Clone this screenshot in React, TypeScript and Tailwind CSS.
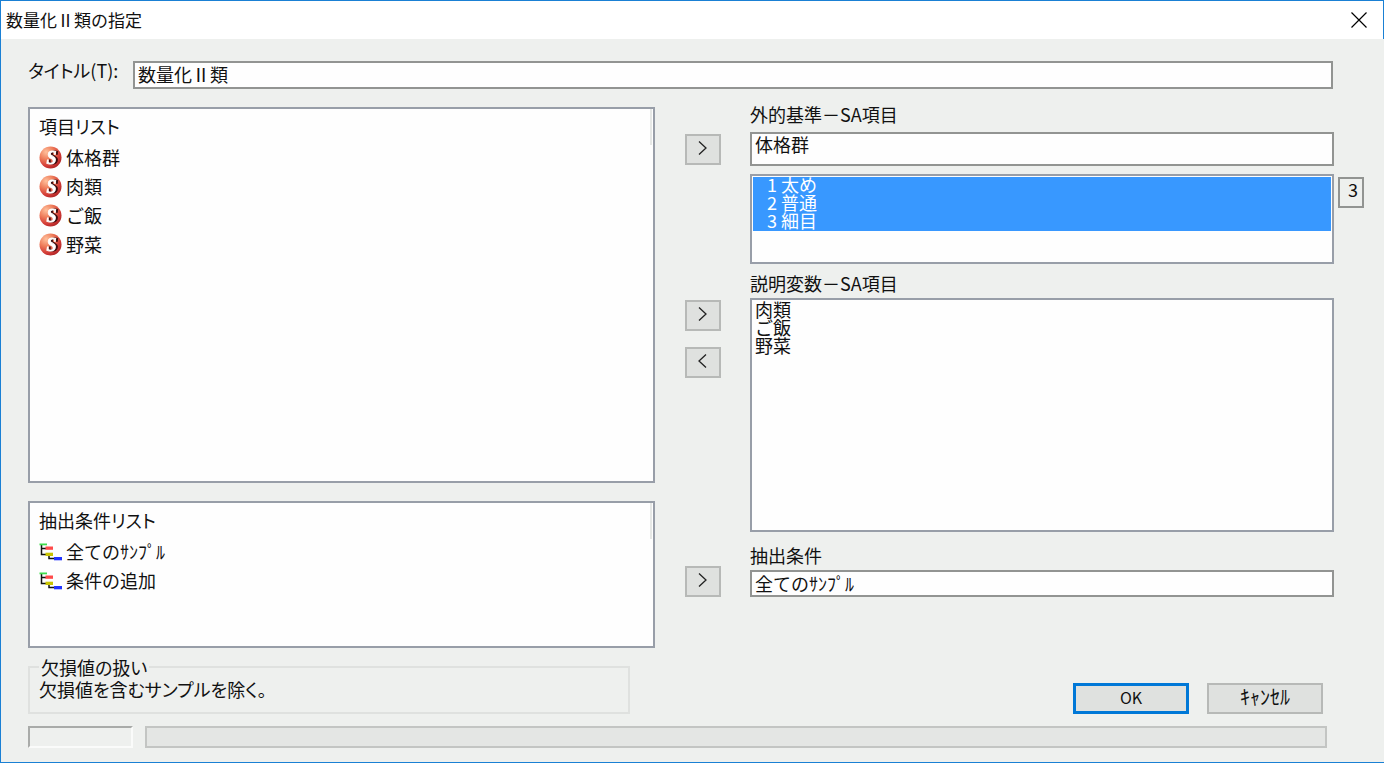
import type { ReactNode } from "react";

const ITEMS = ["体格群", "肉類", "ご飯", "野菜"];
const CONDITIONS = ["全てのｻﾝﾌﾟﾙ", "条件の追加"];
const CATEGORIES = ["太め", "普通", "細目"];
const EXPLANATORY = ["肉類", "ご飯", "野菜"];

const FIELD = "block w-full border-2 border-[#929492] bg-[#fefefe] px-[3px] leading-[18px] outline-none";
const LIST = "border-2 border-[#989ea8] bg-[#fefefe]";

function SphereIcon() {
  return (
    <svg viewBox="0 0 23 23" className="h-[23px] w-[23px] shrink-0" aria-hidden="true">
      <defs>
        <radialGradient id="sphere" cx="0.3" cy="0.25" r="0.85">
          <stop offset="0" stopColor="#ffc09c" />
          <stop offset="0.4" stopColor="#ee7c5a" />
          <stop offset="0.75" stopColor="#d23a36" />
          <stop offset="1" stopColor="#a82224" />
        </radialGradient>
      </defs>
      <circle cx="11.5" cy="11.5" r="11" fill="url(#sphere)" />
      <g fontFamily="Liberation Serif, serif" fontSize="18" fontWeight="700" fontStyle="italic" textAnchor="middle">
        <text
          x="12.5"
          y="17.500"
          fill="#fff"
          stroke="#fff"
          strokeWidth="0.8"
          className="[filter:drop-shadow(2px_0_0_#3a0c0e)]"
        >
          S
        </text>
      </g>
    </svg>
  );
}

function TreeIcon() {
  return (
    <svg viewBox="0 0 23 18" className="h-[18px] w-[23px] shrink-0" aria-hidden="true">
      <path d="M2.500 2V11.500H7M2.500 5.500H7M10 13V15.500H16" fill="none" stroke="#111" strokeWidth="1.500" />
      <rect x="0.500" y="0.500" width="7.500" height="1.800" fill="#3fdc4c" />
      <rect x="6.500" y="3.500" width="7.500" height="3.300" fill="#ff4a4a" />
      <rect x="6.500" y="9.700" width="7.500" height="3.300" fill="#c9c400" />
      <rect x="15" y="14" width="8" height="3.300" fill="#2233ff" />
    </svg>
  );
}

function MoveButton({ direction = "right", label }: { direction?: "left" | "right"; label: string }) {
  return (
    <button
      type="button"
      aria-label={label}
      className="flex h-[31px] w-9 items-center justify-center border-2 border-[#b7b9b7] bg-[#dfe1df] pb-1 pr-[2px]"
    >
      <svg viewBox="0 0 9 14" className="h-[14px] w-[9px]" fill="none" stroke="#222" strokeWidth="1.300">
        <path d={direction === "right" ? "M1 0.500L8 7L1 13.500" : "M8 0.500L1 7L8 13.500"} />
      </svg>
    </button>
  );
}

function SourceList({
  title,
  items,
  icon,
  className,
}: {
  title: string;
  items: string[];
  icon: ReactNode;
  className: string;
}) {
  return (
    <section className={`${LIST} flex ${className}`}>
      <div className="flex-1 px-[9px] pt-[7px]">
        <h2 className="mb-[7px] leading-5 [font-feature-settings:'palt']">{title}</h2>
        <ul role="listbox" aria-label={title}>
          {items.map((item) => (
            <li key={item} role="option" aria-selected={false} className="flex h-[29px] items-center gap-1">
              {icon}
              <span className="pb-[2px]">{item}</span>
            </li>
          ))}
        </ul>
      </div>
      {/* header column divider */}
      <div className="h-9 w-[3px] border-l-2 border-[#e6e8e6]" />
    </section>
  );
}

export default function App() {
  return (
    <div className="flex min-h-screen flex-col border-b border-l border-[#1a80d4] bg-[#eef0ee] font-['Noto_Sans_CJK_JP',sans-serif] text-[18px] leading-[18px] text-[#111]">
      <header className="flex h-[39px] items-center justify-between border-r border-t border-[#1a80d4] bg-white pl-[5px] pr-4">
        <h1 className="text-[17px]">数量化Ⅱ類の指定</h1>
        <button type="button" aria-label="閉じる">
          <svg viewBox="0 0 16 16" className="h-4 w-4" fill="none" stroke="#000" strokeWidth="1.200">
            <path d="M0.500 0.500L15.500 15.500M15.500 0.500L0.500 15.500" />
          </svg>
        </button>
      </header>

      <main className="flex-1 pb-[14px] pl-[27px] pr-5 pt-[22px]">
        <div className="mr-[31px] flex">
          <label htmlFor="title" className="w-[105px] shrink-0 [font-feature-settings:'palt']">
            タイトル(T):
          </label>
          <input id="title" type="text" defaultValue="数量化Ⅱ類" className={`${FIELD} h-7 pb-[2px]`} />
        </div>

        <div className="mt-[18px] flex gap-[30px]">
          <div className="min-w-0 flex-[627]">
            <SourceList title="項目リスト" items={ITEMS} icon={<SphereIcon />} className="min-h-[376px]" />
            <SourceList
              title="抽出条件リスト"
              items={CONDITIONS}
              icon={<TreeIcon />}
              className="mt-[18px] min-h-[147px]"
            />
            <fieldset className="mr-[25px] mt-[10px] h-14 border-2 border-[#dfe1df] px-[9px]">
              <legend className="px-[2px] [font-feature-settings:'palt']">欠損値の扱い</legend>
              <p className="pt-1 [font-feature-settings:'palt']">欠損値を含むサンプルを除く。</p>
            </fieldset>
          </div>

          <div className="min-w-0 flex-[679]">
            <section className="flex gap-[29px]">
              <div className="pt-[27px]">
                <MoveButton label="外的基準に設定" />
              </div>
              <div className="flex-1">
                <label htmlFor="criterion" className="block h-[25px] leading-[14px]">
                  外的基準－SA項目
                </label>
                <div className="mr-[30px]">
                  <input id="criterion" type="text" defaultValue="体格群" className={`${FIELD} h-[34px] pb-[10px]`} />
                </div>
                <div className="mt-2 flex items-start gap-1">
                  <ul
                    role="listbox"
                    aria-label="カテゴリー"
                    aria-multiselectable="true"
                    className={`${LIST} min-h-[90px] flex-1 p-px`}
                  >
                    {CATEGORIES.map((category, index) => (
                      <li
                        key={category}
                        role="option"
                        aria-selected={true}
                        className="flex gap-1 bg-[#3898ff] pb-1 pl-[14px] leading-[14px] text-white"
                      >
                        <span>{index + 1}</span>
                        <span>{category}</span>
                      </li>
                    ))}
                  </ul>
                  <output
                    aria-label="カテゴリー数"
                    className="mt-[3px] h-[31px] w-[26px] border-2 border-[#929492] pr-1 pt-[2px] text-right leading-4"
                  >
                    {CATEGORIES.length}
                  </output>
                </div>
              </div>
            </section>

            <section className="flex gap-[29px]">
              <div className="flex flex-col gap-4 pt-9">
                <MoveButton label="説明変数に追加" />
                <MoveButton direction="left" label="説明変数から削除" />
              </div>
              <div className="mr-[30px] flex-1">
                <h2 className="pb-[6px] pt-[10px]">説明変数－SA項目</h2>
                <ul role="listbox" aria-label="説明変数" className={`${LIST} min-h-[234px] px-[3px] py-[2px]`}>
                  {EXPLANATORY.map((item) => (
                    <li key={item} role="option" aria-selected={false} className="pb-1 leading-[14px]">
                      {item}
                    </li>
                  ))}
                </ul>
              </div>
            </section>

            <section className="flex items-end gap-[29px]">
              <MoveButton label="抽出条件に設定" />
              <div className="mr-[30px] flex-1">
                <label htmlFor="condition" className="block pb-[6px] pt-[14px]">
                  抽出条件
                </label>
                <input id="condition" type="text" defaultValue="全てのｻﾝﾌﾟﾙ" className={`${FIELD} h-[27px] pb-[2px]`} />
              </div>
            </section>

            <div className="mr-[41px] mt-[86px] flex justify-end gap-[18px]">
              <button
                type="button"
                className="h-[31px] w-[116px] border-[3px] border-[#0078d7] bg-[#dfe1df] pb-1 text-[16px]"
              >
                OK
              </button>
              <button type="button" className="h-[31px] w-[116px] border-2 border-[#b7b9b7] bg-[#dfe1df] pb-1 text-[20px]">
                ｷｬﾝｾﾙ
              </button>
            </div>
          </div>
        </div>

        <footer className="mr-[37px] mt-3 flex h-[22px] gap-3">
          <div className="w-[105px] border-2 border-b-[#fafbfa] border-l-[#a9aba9] border-r-[#fafbfa] border-t-[#a9aba9]" />
          <div
            role="progressbar"
            aria-label="進捗"
            aria-valuenow={0}
            className="flex-1 border-2 border-[#c3c5c3] bg-[#e4e6e4]"
          />
        </footer>
      </main>
    </div>
  );
}
